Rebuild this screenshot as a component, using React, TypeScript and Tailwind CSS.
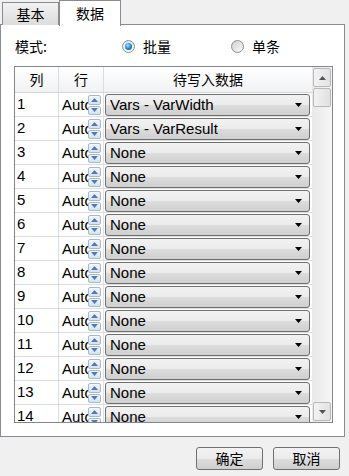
type Row = { id: number; value: string };

const rows: Row[] = [
  { id: 1, value: "Vars - VarWidth" },
  { id: 2, value: "Vars - VarResult" },
  ...Array.from({ length: 12 }, (_, i) => ({ id: i + 3, value: "None" })),
];

const cjk = "font-['Noto_Sans_CJK_SC','Liberation_Sans',sans-serif] text-[14px]";

function Radio({ checked }: { checked: boolean }) {
  if (checked) {
    return (
      <span className="flex h-[13px] w-[13px] items-center justify-center rounded-full border border-[#8a8f96] bg-gradient-to-b from-[#dfe3e8] to-[#fbfbfb]">
        <span className="h-[7px] w-[7px] rounded-full bg-[radial-gradient(circle_at_40%_35%,#a6e2ff,#1b7ed1_55%,#0a4a8a)]" />
      </span>
    );
  }
  return <span className="h-[13px] w-[13px] rounded-full border border-[#8e8f8f] bg-gradient-to-br from-[#cfcfcf] to-[#fbfbfb]" />;
}

function Tri({ up, className }: { up?: boolean; className: string }) {
  return (
    <svg className={className} width="7" height="4" viewBox="0 0 7 4">
      <path d={up ? "M0 4 L3.5 0 L7 4 Z" : "M0 0 L7 0 L3.5 4 Z"} />
    </svg>
  );
}

function Spin() {
  return (
    <div className="flex h-[22px] items-stretch bg-white">
      <div className="w-[28px] overflow-hidden whitespace-nowrap pl-[2px] leading-[22px]">Auto</div>
      <div className="flex w-[13px] flex-col gap-px py-px">
        <span className="flex flex-1 items-center justify-center rounded-[2px] border border-[#a7b7cc] bg-gradient-to-b from-[#f3f7fc] to-[#d5e2f1]">
          <Tri up className="fill-[#4f7ab3]" />
        </span>
        <span className="flex flex-1 items-center justify-center rounded-[2px] border border-[#a7b7cc] bg-gradient-to-b from-[#f3f7fc] to-[#d5e2f1]">
          <Tri className="fill-[#4f7ab3]" />
        </span>
      </div>
    </div>
  );
}

function Combo({ value }: { value: string }) {
  return (
    <div className="flex h-[22px] items-center justify-between rounded-[3px] border border-[#707070] bg-[linear-gradient(#f2f2f2,#ebebeb_50%,#dddddd_50%,#cfcfcf)] pl-[4px] pr-[7px]">
      <span className="truncate">{value}</span>
      <Tri className="fill-black" />
    </div>
  );
}

function ScrollBtn({ up }: { up?: boolean }) {
  return (
    <div className="flex h-[19px] items-center justify-center rounded-[2px] border border-[#b8b8b8] bg-gradient-to-r from-[#f3f3f3] to-[#e2e2e2]">
      <Tri up={up} className="fill-[#555555]" />
    </div>
  );
}

export default function App() {
  return (
    <div className="h-[476px] w-[349px] overflow-hidden bg-[#f0f0f0] font-['Liberation_Sans',sans-serif] text-[15px] text-black">
      <div className={`flex h-[25px] items-end pl-[2px] ${cjk}`}>
        <div className="flex h-[23px] w-[57px] items-center justify-center border border-b-0 border-[#898c95] bg-gradient-to-b from-[#f2f2f2] to-[#dcdcdc]">
          基本
        </div>
        <div className="relative z-10 -mb-px flex h-[26px] w-[62px] items-center justify-center border border-b-0 border-[#898c95] bg-white">
          数据
        </div>
      </div>
      <div className="-mt-px h-[413px] w-[345px] border border-[#898c95] bg-white">
        <div className={`mt-[11px] flex h-[20px] items-center pl-[14px] ${cjk}`}>
          <span className="w-[107px]">模式:</span>
          <div className="flex w-[109px] items-center">
            <Radio checked />
            <span className="ml-[8px]">批量</span>
          </div>
          <div className="flex items-center">
            <Radio checked={false} />
            <span className="ml-[8px]">单条</span>
          </div>
        </div>
        <div className="ml-[13px] mt-[10px] flex h-[357px] w-[319px] border border-[#828790]">
          <div className="w-[297px] overflow-hidden">
            <div className={`flex h-[26px] border-b border-[#d5d5d5] bg-gradient-to-b from-white to-[#f1f2f4] ${cjk}`}>
              <div className="flex w-[44px] items-center justify-center border-r border-[#dcdcdc]">列</div>
              <div className="flex w-[45px] items-center justify-center border-r border-[#dcdcdc]">行</div>
              <div className="flex flex-1 items-center justify-center">待写入数据</div>
            </div>
            {rows.map((row) => (
              <div key={row.id} className="flex h-[24px] border-b border-[#dedede]">
                <div className="flex w-[44px] items-center border-r border-[#dedede] pl-[2px]">{row.id}</div>
                <div className="w-[45px] border-r border-[#dedede] py-px pl-px pr-[2px]">
                  <Spin />
                </div>
                <div className="flex-1 py-px pl-px pr-[2px]">
                  <Combo value={row.value} />
                </div>
              </div>
            ))}
          </div>
          <div className="flex w-[20px] flex-col bg-gradient-to-r from-[#e9e9e9] to-[#f6f6f6] p-px">
            <ScrollBtn up />
            <div className="mt-px h-[19px] rounded-[2px] border border-[#b8b8b8] bg-gradient-to-r from-[#f3f3f3] to-[#e0e0e0]" />
            <div className="flex-1" />
            <ScrollBtn />
          </div>
        </div>
      </div>
      <div className={`flex justify-end gap-[10px] pr-[9px] pt-[10px] ${cjk}`}>
        <button type="button" className="h-[23px] w-[67px] rounded-[3px] border border-[#707070] bg-[linear-gradient(#f2f2f2,#ebebeb_50%,#dddddd_50%,#cfcfcf)]">
          确定
        </button>
        <button type="button" className="h-[23px] w-[67px] rounded-[3px] border border-[#707070] bg-[linear-gradient(#f2f2f2,#ebebeb_50%,#dddddd_50%,#cfcfcf)]">
          取消
        </button>
      </div>
    </div>
  );
}
